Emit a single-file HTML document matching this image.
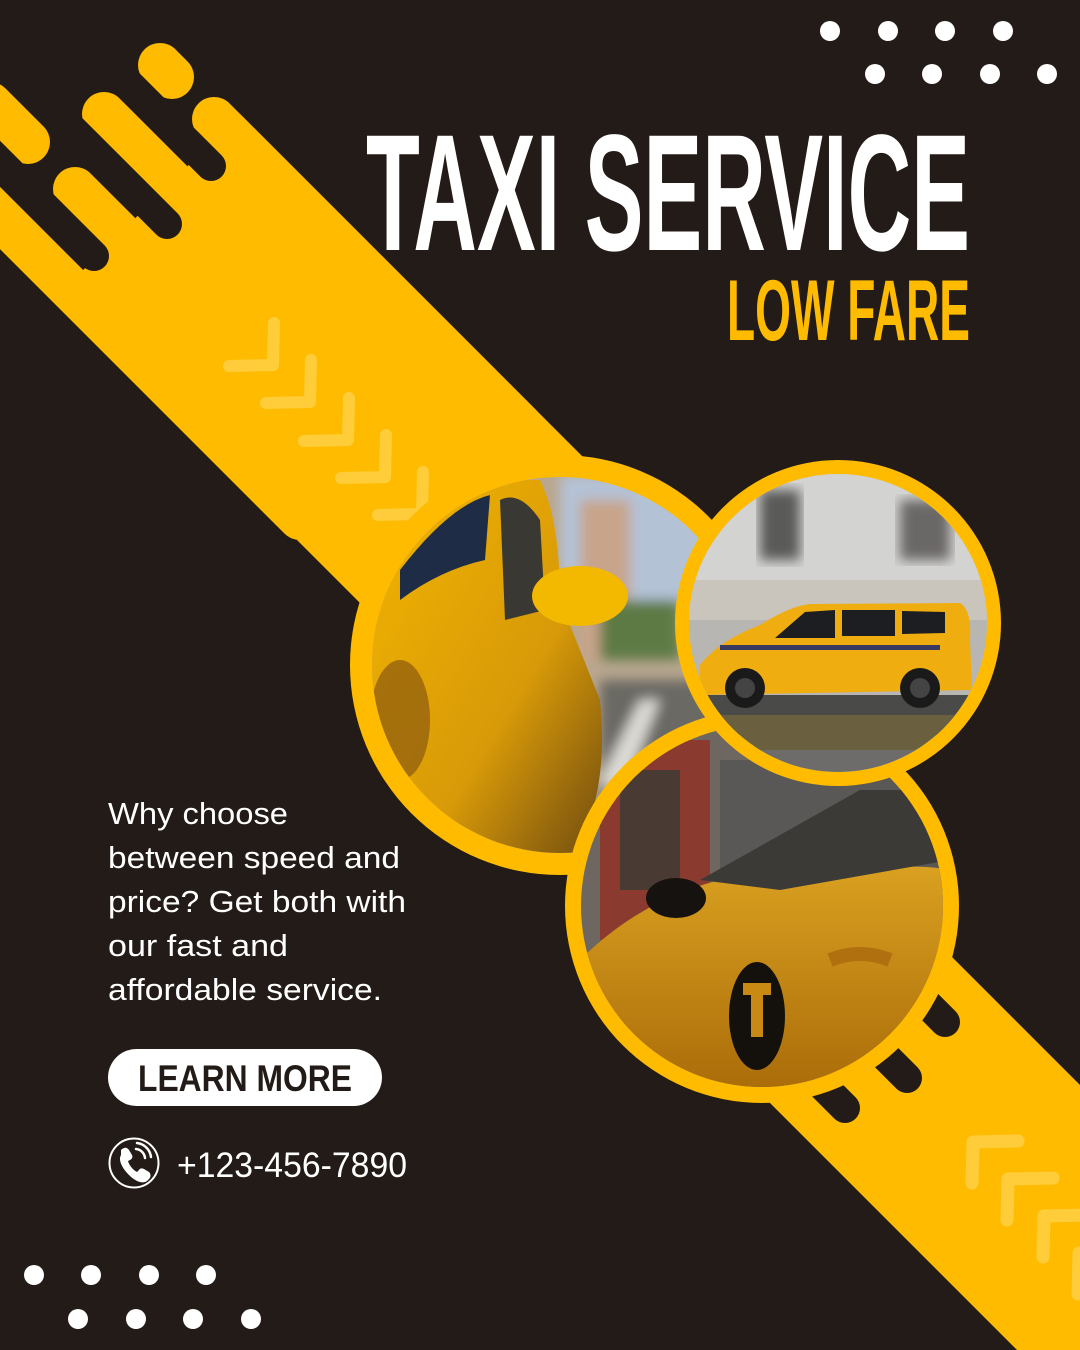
<!DOCTYPE html>
<html><head><meta charset="utf-8"><style>html,body{margin:0;padding:0;background:#231b17}svg{display:block}</style></head>
<body>
<svg width="1080" height="1350" viewBox="0 0 1080 1350" xmlns="http://www.w3.org/2000/svg">
<defs>
<clipPath id="c1"><circle cx="560" cy="665" r="188"/></clipPath>
<clipPath id="c2"><circle cx="838" cy="623" r="149"/></clipPath>
<clipPath id="c3"><circle cx="762" cy="906" r="181"/></clipPath>
<linearGradient id="g1" x1="0" y1="0" x2="1" y2="1"><stop offset="0" stop-color="#f2b400"/><stop offset="0.6" stop-color="#d89a08"/><stop offset="1" stop-color="#6e4a10"/></linearGradient>
<linearGradient id="g3" x1="0" y1="0" x2="0" y2="1"><stop offset="0" stop-color="#d9a020"/><stop offset="1" stop-color="#a86a08"/></linearGradient>
<filter id="bl"><feGaussianBlur stdDeviation="6"/></filter>
</defs>
<rect width="1080" height="1350" fill="#231b17"/>

<polygon points="240,114 760,634 460,703 55,298" fill="#ffbb00"/>
<g stroke="#ffbb00" stroke-width="44" stroke-linecap="round">
<line x1="214" y1="119" x2="520" y2="425"/>
<line x1="104" y1="114" x2="420" y2="430"/>
<line x1="75" y1="189" x2="400" y2="514"/>
<line x1="-50" y1="168" x2="300" y2="518"/>
<line x1="160" y1="65" x2="172" y2="77"/>
<line x1="-10" y1="104" x2="28" y2="142"/>
</g>
<g stroke="#231b17" stroke-width="30" stroke-linecap="round">
<line x1="211" y1="166" x2="40" y2="-5"/>
<line x1="167" y1="224" x2="0" y2="57"/>
<line x1="94" y1="256" x2="-40" y2="122"/>
</g>
<g fill="none" stroke="#ffd045" stroke-width="12" stroke-linecap="round" stroke-linejoin="round" opacity="0.85">
<polyline points="229,366 273,365 274,323"/>
<polyline points="266,403 310,402 311,360"/>
<polyline points="304,441 348,440 349,398"/>
<polyline points="341,478 385,477 386,435"/>
<polyline points="378,515 422,514 423,472"/>
</g>

<polygon points="700,705 1080,1085 1080,1350 1017,1350 600,933" fill="#ffbb00"/>
<g stroke="#231b17" stroke-width="30" stroke-linecap="round">
<line x1="945" y1="1022" x2="850" y2="927"/>
<line x1="907" y1="1078" x2="800" y2="971"/>
<line x1="845" y1="1108" x2="740" y2="1003"/>
</g>
<g fill="none" stroke="#ffd045" stroke-width="13" stroke-linecap="round" stroke-linejoin="round" opacity="0.85">
<polyline points="972,1183 973,1142 1018,1141"/>
<polyline points="1007,1220 1008,1179 1053,1178"/>
<polyline points="1043,1257 1044,1216 1089,1215"/>
<polyline points="1078,1294 1079,1253 1124,1252"/>
</g>

<circle cx="560" cy="665" r="210" fill="#ffbb00"/>
<g clip-path="url(#c1)">
<rect x="370" y="475" width="380" height="380" fill="#b9a78f"/>
<g filter="url(#bl)">
<rect x="560" y="475" width="200" height="130" fill="#b4c2d6"/>
<rect x="580" y="500" width="50" height="160" fill="#c7a48a"/>
<rect x="600" y="600" width="80" height="60" fill="#5d7a45"/>
<rect x="600" y="680" width="150" height="180" fill="#6b6964"/>
<polygon points="600,780 640,700 660,700 620,800" fill="#dcdad4"/>
</g>
<path d="M370,560 Q420,500 500,480 L540,480 Q560,520 560,600 L600,700 Q610,800 570,860 L370,860 Z" fill="url(#g1)"/>
<path d="M400,570 Q450,505 490,495 L485,560 Q440,570 400,600 Z" fill="#1e2d45"/>
<path d="M500,500 Q520,490 540,520 L545,610 L505,620 Z" fill="#3a3832"/>
<ellipse cx="580" cy="596" rx="48" ry="30" fill="#f3b800"/>
<ellipse cx="400" cy="720" rx="30" ry="60" fill="#8a5a10" opacity="0.7"/>
</g>

<circle cx="762" cy="906" r="197" fill="#ffbb00"/>
<g clip-path="url(#c3)">
<rect x="580" y="720" width="370" height="380" fill="#6e6660"/>
<rect x="600" y="740" width="110" height="200" fill="#8a3a2e"/>
<rect x="620" y="770" width="60" height="120" fill="#4a3a34"/>
<rect x="720" y="760" width="230" height="130" fill="#5a5856"/>
<path d="M580,960 Q640,900 720,880 L820,880 Q900,860 950,870 L950,1100 L580,1100 Z" fill="url(#g3)"/>
<path d="M700,880 L860,790 L950,790 L950,860 L780,890 Z" fill="#3c3a36"/>
<ellipse cx="676" cy="898" rx="30" ry="20" fill="#151210"/>
<ellipse cx="757" cy="1016" rx="28" ry="54" fill="#14110d"/>
<path d="M743,983 h28 v12 h-8 v42 h-12 v-42 h-8 z" fill="#c88a12"/>
<path d="M830,960 q30,-12 60,0" stroke="#b07010" stroke-width="14" fill="none"/>
</g>

<circle cx="838" cy="623" r="163" fill="#ffbb00"/>
<g clip-path="url(#c2)">
<rect x="685" y="470" width="310" height="310" fill="#b8b6b2"/>
<rect x="685" y="470" width="310" height="140" fill="#d3d3d1"/>
<rect x="760" y="490" width="40" height="70" fill="#5a5a58" filter="url(#bl)"/>
<rect x="900" y="500" width="50" height="60" fill="#6a6866" filter="url(#bl)"/>
<rect x="685" y="580" width="310" height="40" fill="#c9c5bd"/>
<rect x="685" y="695" width="310" height="40" fill="#4a4a48"/>
<rect x="685" y="715" width="310" height="35" fill="#6a6040"/>
<rect x="685" y="750" width="310" height="40" fill="#6d6c6a"/>
<path d="M700,665 Q720,640 760,625 Q790,606 810,604 L960,603 Q972,610 970,640 L972,690 L700,695 Z" fill="#f0ad10"/>
<path d="M775,638 L805,612 L835,610 L835,638 Z M842,610 L895,610 L895,636 L842,636 Z M902,611 L945,612 L945,633 L902,634 Z" fill="#1d1e22"/>
<rect x="720" y="645" width="220" height="5" fill="#3a3a60"/>
<circle cx="745" cy="688" r="20" fill="#1a1a1a"/><circle cx="745" cy="688" r="10" fill="#444"/>
<circle cx="920" cy="688" r="20" fill="#1a1a1a"/><circle cx="920" cy="688" r="10" fill="#444"/>
</g>

<text x="366" y="250" font-family="Liberation Sans, sans-serif" font-weight="bold" font-size="166" fill="#fff" textLength="604" lengthAdjust="spacingAndGlyphs">TAXI SERVICE</text>
<text x="727" y="340" font-family="Liberation Sans, sans-serif" font-weight="bold" font-size="86" fill="#ffbb00" textLength="243" lengthAdjust="spacingAndGlyphs">LOW FARE</text>

<g font-family="Liberation Sans, sans-serif" font-size="31" fill="#fff">
<text x="108" y="824" textLength="180" lengthAdjust="spacingAndGlyphs">Why choose</text>
<text x="108" y="868" textLength="292" lengthAdjust="spacingAndGlyphs">between speed and</text>
<text x="108" y="912" textLength="298" lengthAdjust="spacingAndGlyphs">price? Get both with</text>
<text x="108" y="956" textLength="180" lengthAdjust="spacingAndGlyphs">our fast and</text>
<text x="108" y="1000" textLength="274" lengthAdjust="spacingAndGlyphs">affordable service.</text>
</g>

<rect x="108" y="1049" width="274" height="57" rx="28.5" fill="#fff"/>
<text x="138" y="1091" font-family="Liberation Sans, sans-serif" font-weight="bold" font-size="37" fill="#231b17" textLength="214" lengthAdjust="spacingAndGlyphs">LEARN MORE</text>

<circle cx="134" cy="1163" r="24.5" fill="none" stroke="#fff" stroke-width="2"/>
<path d="M121,1150 c3,-3 6,-3 8,0 l3,5 c1,2 0,4 -2,5 l-2,1 c1,4 5,9 9,11 l2,-2 c1,-2 3,-2 5,-1 l5,3 c2,2 2,5 0,7 l-2,2 c-4,3 -11,1 -18,-6 c-7,-7 -11,-15 -8,-20 z" fill="#fff"/>
<path d="M136,1149 a10,10 0 0 1 9,9 M137,1143 a16,16 0 0 1 14,14" fill="none" stroke="#fff" stroke-width="2.5" stroke-linecap="round"/>
<text x="177" y="1177" font-family="Liberation Sans, sans-serif" font-size="35" fill="#fff" textLength="230" lengthAdjust="spacingAndGlyphs">+123-456-7890</text>

<g fill="#fff">
<circle cx="830" cy="31" r="10"/><circle cx="888" cy="31" r="10"/><circle cx="945" cy="31" r="10"/><circle cx="1003" cy="31" r="10"/>
<circle cx="875" cy="74" r="10"/><circle cx="932" cy="74" r="10"/><circle cx="990" cy="74" r="10"/><circle cx="1047" cy="74" r="10"/>
<circle cx="34" cy="1275" r="10"/><circle cx="91" cy="1275" r="10"/><circle cx="149" cy="1275" r="10"/><circle cx="206" cy="1275" r="10"/>
<circle cx="78" cy="1319" r="10"/><circle cx="136" cy="1319" r="10"/><circle cx="193" cy="1319" r="10"/><circle cx="251" cy="1319" r="10"/>
</g>
</svg>
</body></html>
